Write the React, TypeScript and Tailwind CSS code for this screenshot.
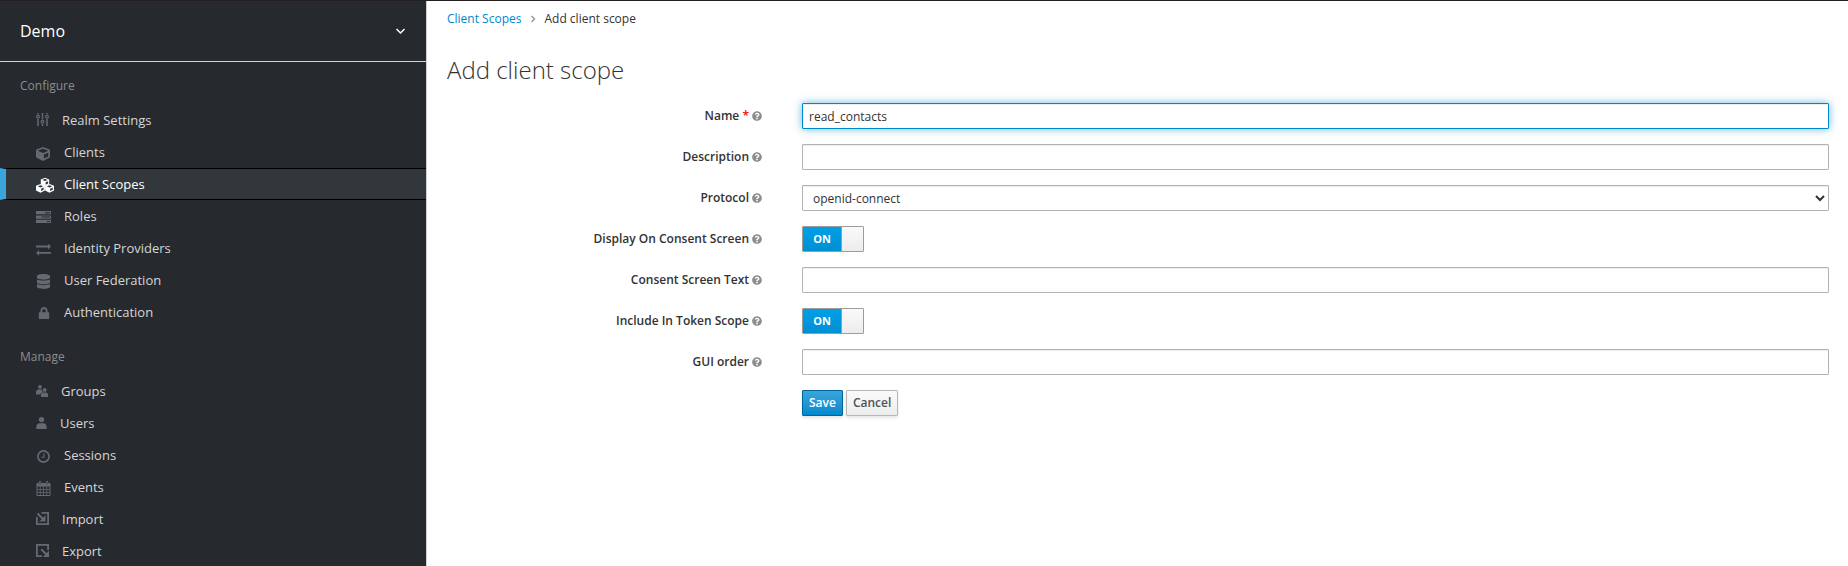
import { useState, type ReactNode } from 'react';
import { FaCube, FaDatabase, FaLock, FaQuestionCircle } from 'react-icons/fa';

type NavItem = { label: string; icon: ReactNode; active?: boolean };

const SettingsIcon = () => (
  <svg width="13" height="20" viewBox="0 0 13 20" fill="none" stroke="currentColor" strokeWidth="1.5" aria-hidden="true">
    <path d="M2 3v1.5M2 9v7M6.5 3v6.5M6.5 14v2M11 3v1.5M11 9v7" />
    <circle cx="2" cy="6.7" r="1.4" strokeWidth="1.2" />
    <circle cx="6.5" cy="11.8" r="1.4" strokeWidth="1.2" />
    <circle cx="11" cy="6.7" r="1.4" strokeWidth="1.2" />
  </svg>
);

const ClientsIcon = () => (
  <span className="flex h-5 w-[15px] items-end pb-px">
    <FaCube size={14} aria-hidden="true" />
  </span>
);

const ScopesIcon = () => (
  <svg width="18" height="20" viewBox="0 0 18 20" className="-mr-[3px]" aria-hidden="true">
    <g fill="currentColor">
      <path d="M9 3.700l4.200 1.700v4.800L9 12.300l-4.200-2.100V5.400z" />
      <path d="M4.500 10l4.400 1.800v4.700l-4.400 2.200L0 16.500v-4.700z" />
      <path d="M13.500 10l4.500 1.800v4.700l-4.500 2.200-4.400-2.200v-4.700z" />
    </g>
    <g fill="#32373b">
      <path d="M6.300 5.900L9 4.800l2.700 1.100L9 7zM9.600 8.300l2.500-1.100v2.300l-2.500 1.200z" />
      <path d="M1.800 12.300l2.700-1.100 2.700 1.100-2.700 1.100zM5.100 14.700l2.500-1.100v2.200l-2.500 1.300z" />
      <path d="M10.800 12.300l2.700-1.100 2.700 1.100-2.700 1.100zM14.100 14.700l2.600-1.100v2.200l-2.600 1.300z" />
    </g>
  </svg>
);

const RolesIcon = () => (
  <svg width="15" height="20" viewBox="0 0 15 20" fill="currentColor" aria-hidden="true">
    <path
      fillRule="evenodd"
      d="M0 5h15v3.300H0zM9 6.200v1h5v-1zM0 9.400h15v3.300H0zM5.500 10.600v1H14v-1zM0 13.800h15v3.200H0zM11 14.900v1h3v-1z"
    />
  </svg>
);

const ExchangeIcon = () => (
  <svg width="15" height="20" viewBox="0 0 15 20" fill="currentColor" aria-hidden="true">
    <path d="M0 7.600h12V5.700l3 2.900-3 2.900V9.400H0zM15 13.900H3V12l-3 2.900 3 2.900v-2h12z" />
  </svg>
);

const FederationIcon = () => (
  <span className="flex h-5 w-[15px] items-end justify-center pb-px">
    <FaDatabase size={15} aria-hidden="true" />
  </span>
);

const LockIcon = () => (
  <span className="flex h-5 w-[15px] items-end justify-center pb-[3px]">
    <FaLock size={12} aria-hidden="true" />
  </span>
);

const GroupsIcon = () => (
  <svg width="12" height="20" viewBox="0 0 12 20" fill="currentColor" aria-hidden="true">
    <circle cx="4" cy="5.900" r="1.900" />
    <circle cx="8.700" cy="8.900" r="1.900" />
    <path d="M0 13.500v-2.300c0-1.700 1-2.700 2.600-2.700h2.800c.5 0 .8.200 1 .6-.3 1 0 1.700.5 2.300-1.400.3-2.300 1-2.700 2.100z" />
    <path d="M5 16v-2.100c0-1.600 1-2.500 2.500-2.500h2.200c1.500 0 2.400.9 2.400 2.500V16z" />
  </svg>
);

const UserIcon = () => (
  <svg width="11" height="20" viewBox="0 0 11 20" fill="currentColor" aria-hidden="true">
    <circle cx="5.500" cy="6.600" r="2.700" />
    <path d="M.3 16v-2c0-2.300 1.300-3.700 3.300-3.700h3.800c2 0 3.300 1.400 3.300 3.700v2z" />
  </svg>
);

const ClockIcon = () => (
  <svg width="15" height="20" viewBox="0 0 15 20" fill="none" stroke="currentColor" aria-hidden="true">
    <circle cx="7.500" cy="11.500" r="5.600" strokeWidth="1.700" />
    <path d="M8 8.200v4H5.300" strokeWidth="1.100" />
  </svg>
);

const CalendarIcon = () => (
  <svg width="15" height="20" viewBox="0 0 15 20" aria-hidden="true">
    <path
      d="M1.500 6h1.300V5.200a1.200 1.200 0 0 1 2.400 0V6h4.600V5.200a1.200 1.200 0 0 1 2.400 0V6h1.300a1 1 0 0 1 1 1v11a1 1 0 0 1-1 1h-12a1 1 0 0 1-1-1V7a1 1 0 0 1 1-1z"
      fill="currentColor"
    />
    <path
      d="M1.500 9.500h2.300V12H1.500zM4.600 9.500h2.500V12H4.600zM7.900 9.500h2.500V12H7.900zM11.200 9.500h2.300V12h-2.300zM1.500 12.700h2.300v2.400H1.500zM4.600 12.700h2.500v2.400H4.600zM7.900 12.700h2.500v2.400H7.900zM11.200 12.700h2.300v2.400h-2.300zM1.500 15.800h2.300V18H1.500zM4.600 15.800h2.500V18H4.600zM7.900 15.800h2.500V18H7.900zM11.200 15.800h2.300V18h-2.300zM3.700 5h.7v2.500h-.7zM10.700 5h.7v2.500h-.7z"
      fill="#26292d"
    />
  </svg>
);

const ImportIcon = () => (
  <svg width="13" height="20" viewBox="0 0 13 20" fill="none" stroke="currentColor" strokeWidth="1.800" aria-hidden="true">
    <path d="M.9 8v7.100h11.200V3.900H5.500" />
    <path d="M1.500 4.500l6 6" strokeWidth="2" />
    <path d="M9.500 6.300v6.200H3.300z" fill="currentColor" stroke="none" />
  </svg>
);

const ExportIcon = () => (
  <svg width="13" height="20" viewBox="0 0 13 20" fill="none" stroke="currentColor" strokeWidth="1.800" aria-hidden="true">
    <path d="M6 15.100H.9V3.900h11.200V9" />
    <path d="M5.200 8.200l5.500 5.500" strokeWidth="2" />
    <path d="M13 9.800V16H6.800z" fill="currentColor" stroke="none" />
  </svg>
);

const configure: NavItem[] = [
  { label: 'Realm Settings', icon: <SettingsIcon /> },
  { label: 'Clients', icon: <ClientsIcon /> },
  { label: 'Client Scopes', icon: <ScopesIcon />, active: true },
  { label: 'Roles', icon: <RolesIcon /> },
  { label: 'Identity Providers', icon: <ExchangeIcon /> },
  { label: 'User Federation', icon: <FederationIcon /> },
  { label: 'Authentication', icon: <LockIcon /> },
];

const manage: NavItem[] = [
  { label: 'Groups', icon: <GroupsIcon /> },
  { label: 'Users', icon: <UserIcon /> },
  { label: 'Sessions', icon: <ClockIcon /> },
  { label: 'Events', icon: <CalendarIcon /> },
  { label: 'Import', icon: <ImportIcon /> },
  { label: 'Export', icon: <ExportIcon /> },
];

function NavSection({ title, items }: { title: string; items: NavItem[] }) {
  return (
    <section>
      <h2 className="px-5 text-[12px] leading-5 text-[#8b8d8f]">{title}</h2>
      <ul className="mt-2">
        {items.map((item) => (
          <li key={item.label}>
            <a
              href="#"
              aria-current={item.active ? 'page' : undefined}
              className={
                item.active
                  ? 'flex h-8 items-center gap-[13px] border-y border-l-[6px] border-y-black border-l-[#39a5dc] bg-[#32373b] pl-[30px] text-[13px] text-white'
                  : 'flex h-8 items-center gap-[13px] pl-9 text-[13px] text-[#d6d6d6]'
              }
            >
              <span className={item.active ? 'text-white' : 'text-[#656a71]'}>{item.icon}</span>
              {item.label}
            </a>
          </li>
        ))}
      </ul>
    </section>
  );
}

function Row({ id, label, required, children }: { id: string; label: string; required?: boolean; children: ReactNode }) {
  return (
    <div className="grid grid-cols-[4fr_13fr] items-center gap-10">
      <div className="flex items-center justify-end gap-[3px]">
        <label htmlFor={id} className="font-semibold">
          {label}
          {required && <span className="text-[#f00]"> *</span>}
        </label>
        <FaQuestionCircle size={10} className="text-[#8b8d8f]" aria-hidden="true" />
      </div>
      {children}
    </div>
  );
}

const field = 'h-[26px] w-full rounded-[1px] border border-[#b3b3b3] bg-white px-1.5 shadow-[inset_0_1px_1px_rgba(0,0,0,0.075)] outline-none';
const focusedField = 'h-[26px] w-full rounded-[1px] border border-[#0088ce] bg-white px-1.5 shadow-[inset_0_1px_1px_rgba(0,0,0,0.075),0_0_8px_rgba(0,136,206,0.6)] outline-none';

function Toggle({ id }: { id: string }) {
  const [on, setOn] = useState(true);
  return (
    <label className="flex h-[26px] w-[62px] cursor-pointer overflow-hidden rounded-[1px] border border-[#9c9c9c]">
      <input id={id} type="checkbox" className="sr-only" checked={on} onChange={(e) => setOn(e.target.checked)} />
      {on ? (
        <>
          <span className="flex w-[38px] items-center justify-center bg-linear-to-b from-[#00a0e8] to-[#008fd3] text-[11px] font-bold text-white">ON</span>
          <span className="flex-1 border-l border-[#9c9c9c] bg-linear-to-b from-[#fafafa] to-[#ececec]" />
        </>
      ) : (
        <>
          <span className="flex-1 border-r border-[#9c9c9c] bg-linear-to-b from-[#fafafa] to-[#ececec]" />
          <span className="flex w-[38px] items-center justify-center bg-white text-[11px] font-bold">OFF</span>
        </>
      )}
    </label>
  );
}

export default function App() {
  const [name, setName] = useState('read_contacts');
  return (
    <div className="flex min-h-screen border-t border-[#231f20] bg-white font-['Open_Sans','Noto_Sans',sans-serif] text-[12px] leading-5 text-[#333]">
      <aside className="w-[427px] shrink-0 border-r border-[#d0d0d0] bg-[#26292d]">
        <button type="button" className="flex h-[61px] w-full items-center justify-between border-b border-[#d0d5d3] px-5 text-[16px] text-white">
          Demo
          <svg width="11" height="8" viewBox="0 0 11 8" fill="none" stroke="currentColor" strokeWidth="1.500" aria-hidden="true">
            <path d="M1.500 2l4 4 4-4" />
          </svg>
        </button>
        <nav className="flex flex-col gap-[19px] pt-[14px]">
          <NavSection title="Configure" items={configure} />
          <NavSection title="Manage" items={manage} />
        </nav>
      </aside>

      <main className="min-w-0 flex-1 px-[19px] pt-2">
        <nav aria-label="Breadcrumb" className="pl-px">
          <ol className="flex items-center">
            <li>
              <a href="#" className="text-[#0088ce]">Client Scopes</a>
            </li>
            <li aria-hidden="true" className="flex w-[23px] justify-center">
              <svg width="6" height="8" viewBox="0 0 6 8" fill="none" stroke="#8f8f8f" strokeWidth="1.300">
                <path d="M1.500 1l3 3-3 3" />
              </svg>
            </li>
            <li>Add client scope</li>
          </ol>
        </nav>
        <h1 className="mt-[26px] pl-px text-[24px] leading-[30px] font-light">Add client scope</h1>

        <form className="mt-[18px] flex flex-col gap-[15px]" onSubmit={(e) => e.preventDefault()}>
          <Row id="name" label="Name" required>
            <input id="name" type="text" className={focusedField} value={name} onChange={(e) => setName(e.target.value)} />
          </Row>
          <Row id="description" label="Description">
            <input id="description" type="text" className={field} />
          </Row>
          <Row id="protocol" label="Protocol">
            <select id="protocol" className={field} defaultValue="openid-connect">
              <option>openid-connect</option>
              <option>saml</option>
            </select>
          </Row>
          <Row id="consent" label="Display On Consent Screen">
            <Toggle id="consent" />
          </Row>
          <Row id="consent-text" label="Consent Screen Text">
            <input id="consent-text" type="text" className={field} />
          </Row>
          <Row id="token-scope" label="Include In Token Scope">
            <Toggle id="token-scope" />
          </Row>
          <Row id="gui-order" label="GUI order">
            <input id="gui-order" type="text" className={field} />
          </Row>
          <div className="grid grid-cols-[4fr_13fr] gap-10">
            <div className="col-start-2 flex gap-[3px]">
              <button type="submit" className="h-[26px] rounded-[1px] border border-[#00659c] bg-linear-to-b from-[#39a5dc] to-[#0088ce] px-1.5 font-semibold text-white shadow-[0_2px_3px_rgba(3,3,3,0.1)]">
                Save
              </button>
              <button type="button" className="h-[26px] rounded-[1px] border border-[#b7b7b7] bg-linear-to-b from-[#fafafa] to-[#ededed] px-1.5 font-semibold text-[#4d5258] shadow-[0_2px_3px_rgba(3,3,3,0.1)]">
                Cancel
              </button>
            </div>
          </div>
        </form>
      </main>
    </div>
  );
}
